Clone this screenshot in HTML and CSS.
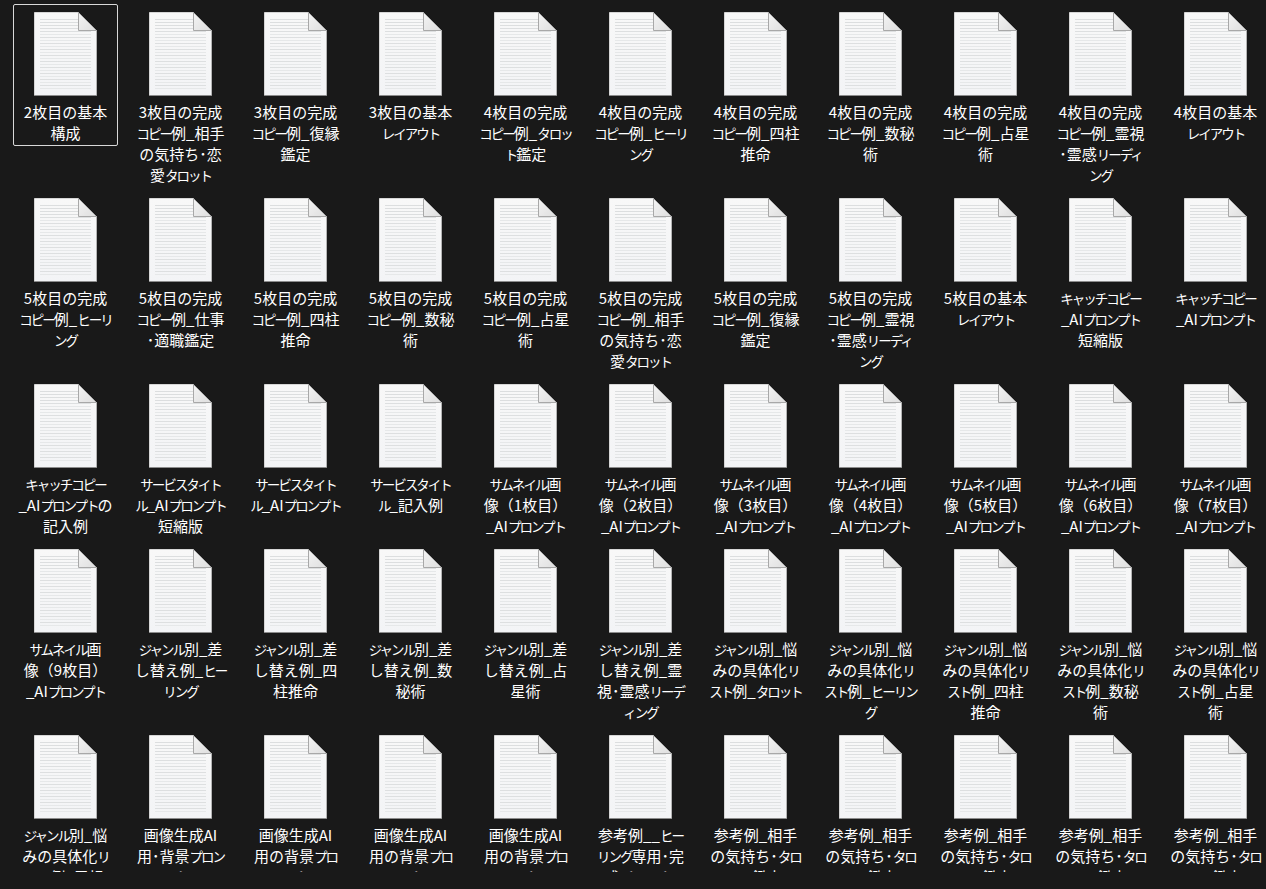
FILE: index.html
```html
<!DOCTYPE html>
<html lang="ja">
<head>
  <title>Files</title>
  <link rel="stylesheet" href="styles.css">
</head>
<body>
  <svg class="defs" width="0" height="0">
    <defs>
      <linearGradient id="sheet" x1="0" y1="0" x2="0" y2="1">
        <stop offset="0" stop-color="#f8f8f8"/>
        <stop offset="1" stop-color="#f3f4f6"/>
      </linearGradient>
      <linearGradient id="fold" x1="0" y1="0" x2="1" y2="1">
        <stop offset="0" stop-color="#f4f4f4"/>
        <stop offset="1" stop-color="#dedede"/>
      </linearGradient>
      <symbol id="doc" viewBox="0 0 63 84">
        <path d="M0.5 0.5H44.5L62.5 18.5V83.5H0.5Z" fill="url(#sheet)" stroke="#d6d6d6"/>
        <path d="M0 83.5H63" stroke="#8c8c8c"/>
        <path d="M62.5 19V83" stroke="#b4b4b4"/>
        <path d="M6 7.5H44M6 10.5H44M6 13.5H44M6 16.5H44" stroke="#dcdedf"/>
        <path d="M6 19.5H57M6 25.5H57M6 31.5H57M6 37.5H57M6 43.5H57M6 49.5H57M6 55.5H57M6 61.5H57M6 67.5H57M6 73.5H57" stroke="#dddfe0"/>
        <path d="M6 22.5H57M6 28.5H57M6 34.5H57M6 40.5H57M6 46.5H57M6 52.5H57M6 58.5H57M6 64.5H57M6 70.5H57M6 76.5H57" stroke="#e6e8e9"/>
        <path d="M44.5 0.5L62.5 18.5H44.5Z" fill="url(#fold)" stroke="#a8a8a8"/>
      </symbol>
    </defs>
  </svg>

  <div class="pane">
    <div class="files">
      <div class="file selected"><svg class="icon"><use href="#doc"/></svg><div class="name">2枚目の基本<br>構成</div></div>
      <div class="file"><svg class="icon"><use href="#doc"/></svg><div class="name">3枚目の完成<br><span class="k">コピー</span>例_相手<br>の気持ち･恋<br>愛<span class="k">タロット</span></div></div>
      <div class="file"><svg class="icon"><use href="#doc"/></svg><div class="name">3枚目の完成<br><span class="k">コピー</span>例_復縁<br>鑑定</div></div>
      <div class="file"><svg class="icon"><use href="#doc"/></svg><div class="name">3枚目の基本<br><span class="k">レイアウト</span></div></div>
      <div class="file"><svg class="icon"><use href="#doc"/></svg><div class="name">4枚目の完成<br><span class="k">コピー</span>例_<span class="k">タロッ</span><br><span class="k">ト</span>鑑定</div></div>
      <div class="file"><svg class="icon"><use href="#doc"/></svg><div class="name">4枚目の完成<br><span class="k">コピー</span>例_<span class="k">ヒーリ</span><br><span class="k">ング</span></div></div>
      <div class="file"><svg class="icon"><use href="#doc"/></svg><div class="name">4枚目の完成<br><span class="k">コピー</span>例_四柱<br>推命</div></div>
      <div class="file"><svg class="icon"><use href="#doc"/></svg><div class="name">4枚目の完成<br><span class="k">コピー</span>例_数秘<br>術</div></div>
      <div class="file"><svg class="icon"><use href="#doc"/></svg><div class="name">4枚目の完成<br><span class="k">コピー</span>例_占星<br>術</div></div>
      <div class="file"><svg class="icon"><use href="#doc"/></svg><div class="name">4枚目の完成<br><span class="k">コピー</span>例_霊視<br>･霊感<span class="k">リーディ</span><br><span class="k">ング</span></div></div>
      <div class="file"><svg class="icon"><use href="#doc"/></svg><div class="name">4枚目の基本<br><span class="k">レイアウト</span></div></div>

      <div class="file"><svg class="icon"><use href="#doc"/></svg><div class="name">5枚目の完成<br><span class="k">コピー</span>例_<span class="k">ヒーリ</span><br><span class="k">ング</span></div></div>
      <div class="file"><svg class="icon"><use href="#doc"/></svg><div class="name">5枚目の完成<br><span class="k">コピー</span>例_仕事<br>･適職鑑定</div></div>
      <div class="file"><svg class="icon"><use href="#doc"/></svg><div class="name">5枚目の完成<br><span class="k">コピー</span>例_四柱<br>推命</div></div>
      <div class="file"><svg class="icon"><use href="#doc"/></svg><div class="name">5枚目の完成<br><span class="k">コピー</span>例_数秘<br>術</div></div>
      <div class="file"><svg class="icon"><use href="#doc"/></svg><div class="name">5枚目の完成<br><span class="k">コピー</span>例_占星<br>術</div></div>
      <div class="file"><svg class="icon"><use href="#doc"/></svg><div class="name">5枚目の完成<br><span class="k">コピー</span>例_相手<br>の気持ち･恋<br>愛<span class="k">タロット</span></div></div>
      <div class="file"><svg class="icon"><use href="#doc"/></svg><div class="name">5枚目の完成<br><span class="k">コピー</span>例_復縁<br>鑑定</div></div>
      <div class="file"><svg class="icon"><use href="#doc"/></svg><div class="name">5枚目の完成<br><span class="k">コピー</span>例_霊視<br>･霊感<span class="k">リーディ</span><br><span class="k">ング</span></div></div>
      <div class="file"><svg class="icon"><use href="#doc"/></svg><div class="name">5枚目の基本<br><span class="k">レイアウト</span></div></div>
      <div class="file"><svg class="icon"><use href="#doc"/></svg><div class="name"><span class="k">キャッチコピー</span><br>_AI<span class="k">プロンプト</span><br>短縮版</div></div>
      <div class="file"><svg class="icon"><use href="#doc"/></svg><div class="name"><span class="k">キャッチコピー</span><br>_AI<span class="k">プロンプト</span></div></div>

      <div class="file"><svg class="icon"><use href="#doc"/></svg><div class="name"><span class="k">キャッチコピー</span><br>_AI<span class="k">プロンプト</span>の<br>記入例</div></div>
      <div class="file"><svg class="icon"><use href="#doc"/></svg><div class="name"><span class="k">サービスタイト</span><br><span class="k">ル</span>_AI<span class="k">プロンプト</span><br>短縮版</div></div>
      <div class="file"><svg class="icon"><use href="#doc"/></svg><div class="name"><span class="k">サービスタイト</span><br><span class="k">ル</span>_AI<span class="k">プロンプト</span></div></div>
      <div class="file"><svg class="icon"><use href="#doc"/></svg><div class="name"><span class="k">サービスタイト</span><br><span class="k">ル</span>_記入例</div></div>
      <div class="file"><svg class="icon"><use href="#doc"/></svg><div class="name"><span class="k">サムネイル</span>画<br>像（1枚目）<br>_AI<span class="k">プロンプト</span></div></div>
      <div class="file"><svg class="icon"><use href="#doc"/></svg><div class="name"><span class="k">サムネイル</span>画<br>像（2枚目）<br>_AI<span class="k">プロンプト</span></div></div>
      <div class="file"><svg class="icon"><use href="#doc"/></svg><div class="name"><span class="k">サムネイル</span>画<br>像（3枚目）<br>_AI<span class="k">プロンプト</span></div></div>
      <div class="file"><svg class="icon"><use href="#doc"/></svg><div class="name"><span class="k">サムネイル</span>画<br>像（4枚目）<br>_AI<span class="k">プロンプト</span></div></div>
      <div class="file"><svg class="icon"><use href="#doc"/></svg><div class="name"><span class="k">サムネイル</span>画<br>像（5枚目）<br>_AI<span class="k">プロンプト</span></div></div>
      <div class="file"><svg class="icon"><use href="#doc"/></svg><div class="name"><span class="k">サムネイル</span>画<br>像（6枚目）<br>_AI<span class="k">プロンプト</span></div></div>
      <div class="file"><svg class="icon"><use href="#doc"/></svg><div class="name"><span class="k">サムネイル</span>画<br>像（7枚目）<br>_AI<span class="k">プロンプト</span></div></div>

      <div class="file"><svg class="icon"><use href="#doc"/></svg><div class="name"><span class="k">サムネイル</span>画<br>像（9枚目）<br>_AI<span class="k">プロンプト</span></div></div>
      <div class="file"><svg class="icon"><use href="#doc"/></svg><div class="name"><span class="k">ジャンル</span>別_差<br>し替え例_<span class="k">ヒー</span><br><span class="k">リング</span></div></div>
      <div class="file"><svg class="icon"><use href="#doc"/></svg><div class="name"><span class="k">ジャンル</span>別_差<br>し替え例_四<br>柱推命</div></div>
      <div class="file"><svg class="icon"><use href="#doc"/></svg><div class="name"><span class="k">ジャンル</span>別_差<br>し替え例_数<br>秘術</div></div>
      <div class="file"><svg class="icon"><use href="#doc"/></svg><div class="name"><span class="k">ジャンル</span>別_差<br>し替え例_占<br>星術</div></div>
      <div class="file"><svg class="icon"><use href="#doc"/></svg><div class="name"><span class="k">ジャンル</span>別_差<br>し替え例_霊<br>視･霊感<span class="k">リーデ</span><br><span class="k">ィング</span></div></div>
      <div class="file"><svg class="icon"><use href="#doc"/></svg><div class="name"><span class="k">ジャンル</span>別_悩<br>みの具体化<span class="k">リ</span><br><span class="k">スト</span>例_<span class="k">タロット</span></div></div>
      <div class="file"><svg class="icon"><use href="#doc"/></svg><div class="name"><span class="k">ジャンル</span>別_悩<br>みの具体化<span class="k">リ</span><br><span class="k">スト</span>例_<span class="k">ヒーリン</span><br><span class="k">グ</span></div></div>
      <div class="file"><svg class="icon"><use href="#doc"/></svg><div class="name"><span class="k">ジャンル</span>別_悩<br>みの具体化<span class="k">リ</span><br><span class="k">スト</span>例_四柱<br>推命</div></div>
      <div class="file"><svg class="icon"><use href="#doc"/></svg><div class="name"><span class="k">ジャンル</span>別_悩<br>みの具体化<span class="k">リ</span><br><span class="k">スト</span>例_数秘<br>術</div></div>
      <div class="file"><svg class="icon"><use href="#doc"/></svg><div class="name"><span class="k">ジャンル</span>別_悩<br>みの具体化<span class="k">リ</span><br><span class="k">スト</span>例_占星<br>術</div></div>

      <div class="file"><svg class="icon"><use href="#doc"/></svg><div class="name"><span class="k">ジャンル</span>別_悩<br>みの具体化<span class="k">リ</span><br><span class="k">スト</span>例_霊視</div></div>
      <div class="file"><svg class="icon"><use href="#doc"/></svg><div class="name">画像生成AI<br>用･背景<span class="k">プロン</span><br><span class="k">プト</span></div></div>
      <div class="file"><svg class="icon"><use href="#doc"/></svg><div class="name">画像生成AI<br>用の背景<span class="k">プロ</span><br><span class="k">ンプト</span></div></div>
      <div class="file"><svg class="icon"><use href="#doc"/></svg><div class="name">画像生成AI<br>用の背景<span class="k">プロ</span><br><span class="k">ンプト</span></div></div>
      <div class="file"><svg class="icon"><use href="#doc"/></svg><div class="name">画像生成AI<br>用の背景<span class="k">プロ</span><br><span class="k">ンプト</span></div></div>
      <div class="file"><svg class="icon"><use href="#doc"/></svg><div class="name">参考例__<span class="k">ヒー</span><br><span class="k">リング</span>専用･完<br>成<span class="k">プロンプト</span></div></div>
      <div class="file"><svg class="icon"><use href="#doc"/></svg><div class="name">参考例_相手<br>の気持ち･<span class="k">タロ</span><br><span class="k">ット</span>鑑定</div></div>
      <div class="file"><svg class="icon"><use href="#doc"/></svg><div class="name">参考例_相手<br>の気持ち･<span class="k">タロ</span><br><span class="k">ット</span>鑑定</div></div>
      <div class="file"><svg class="icon"><use href="#doc"/></svg><div class="name">参考例_相手<br>の気持ち･<span class="k">タロ</span><br><span class="k">ット</span>鑑定</div></div>
      <div class="file"><svg class="icon"><use href="#doc"/></svg><div class="name">参考例_相手<br>の気持ち･<span class="k">タロ</span><br><span class="k">ット</span>鑑定</div></div>
      <div class="file"><svg class="icon"><use href="#doc"/></svg><div class="name">参考例_相手<br>の気持ち･<span class="k">タロ</span><br><span class="k">ット</span>鑑定</div></div>
    </div>
  </div>
</body>
</html>
```

FILE: styles.css
```css
html, body {
  height: 100%;
  margin: 0;
  background: #191919;
}

body {
  overflow: hidden;
}

.defs {
  display: block;
  height: 0;
}

.pane {
  height: 872px;
  overflow: hidden;
}

.files {
  display: grid;
  grid-template-columns: repeat(11, 105px);
  column-gap: 10px;
  row-gap: 2px;
  align-items: start;
  padding: 4px 0 0 13px;
}

.file {
  box-sizing: border-box;
  border: 1px solid transparent;
  border-radius: 2px;
  padding: 7px 0 2px;
  color: #fff;
  font-family: "Noto Sans CJK JP", "Noto Sans", sans-serif;
  font-size: 15px;
  line-height: 21px;
  text-align: center;
}

.file.selected {
  border-color: #d8d8d8;
}

.icon {
  display: block;
  width: 63px;
  height: 84px;
  margin: 0 auto;
}

.name {
  margin-top: 5px;
  white-space: nowrap;
}

/* katakana runs sit narrower than the kanji around them */
.k {
  font-size: 13.5px;
  letter-spacing: -2px;
  line-height: 1;
}
```
